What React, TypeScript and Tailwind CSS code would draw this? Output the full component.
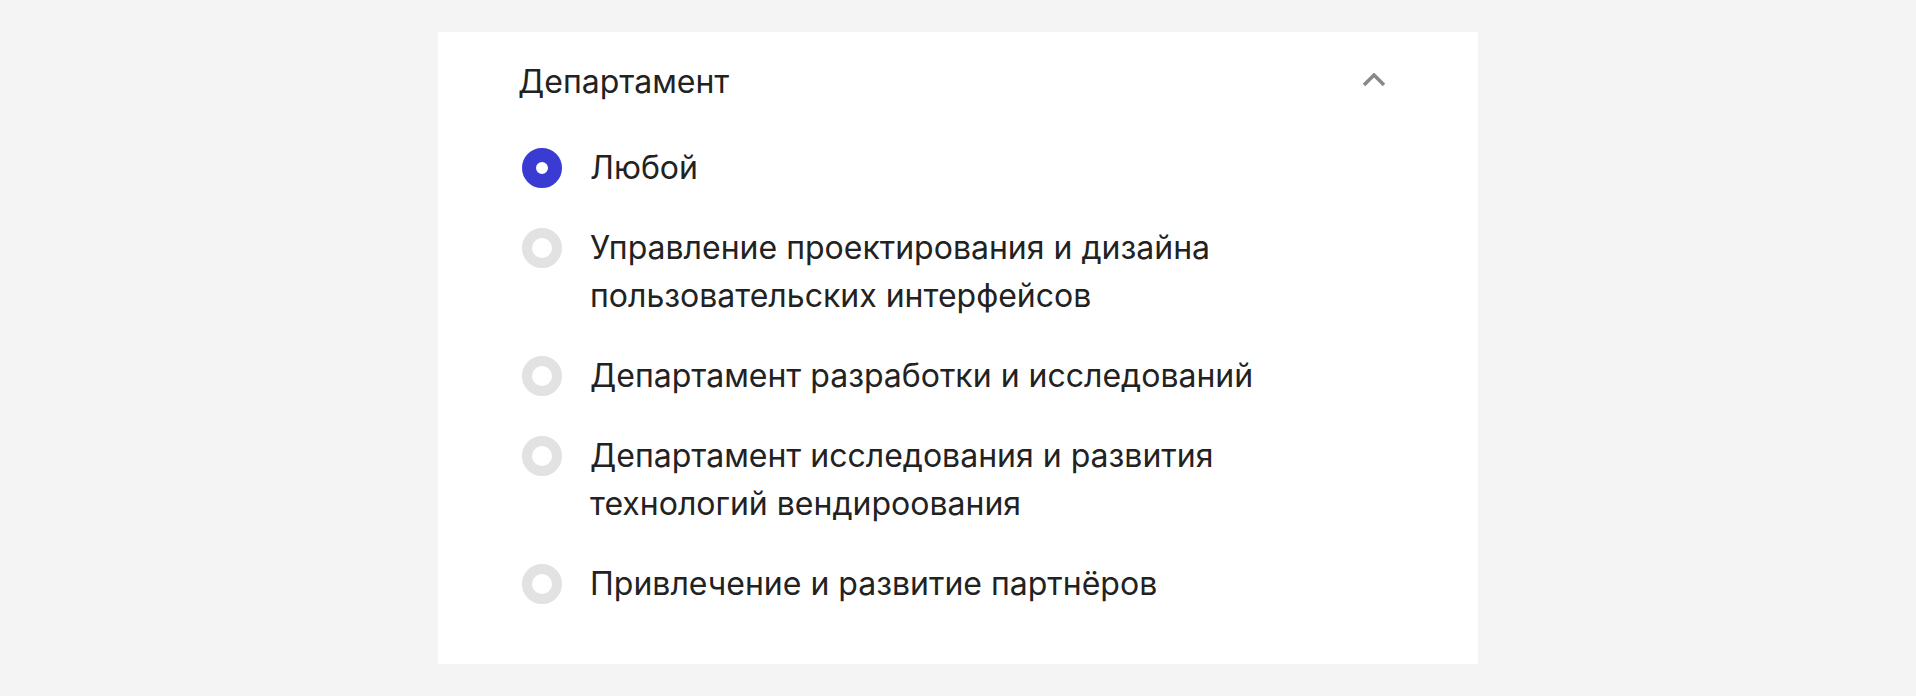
import { useState } from "react";

const options = [
  "Любой",
  "Управление проектирования и дизайна пользовательских интерфейсов",
  "Департамент разработки и исследований",
  "Департамент исследования и развития технологий вендироования",
  "Привлечение и развитие партнёров",
];

const Radio = ({ checked }: { checked: boolean }) =>
  checked ? (
    <span className="mt-1 box-border block h-10 w-10 shrink-0 rounded-full border-[14px] border-[#3a3bd3] bg-white" />
  ) : (
    <span className="mt-1 box-border block h-10 w-10 shrink-0 rounded-full border-[10px] border-[#e2e2e2] bg-white" />
  );

export default function App() {
  const [selected, setSelected] = useState(0);
  const [open, setOpen] = useState(true);

  return (
    <div className="min-h-screen bg-[#f4f4f4] py-8 font-['Inter','Noto_Sans',sans-serif] text-[#222222]">
      <div className="mx-auto w-[1040px] bg-white pl-20 pr-[92px] pt-[26px] pb-14">
        <div className="flex items-start justify-between">
          <h3 className="text-[32px] leading-[48px] font-normal">Департамент</h3>
          <button
            type="button"
            aria-label="toggle"
            onClick={() => setOpen(!open)}
            className="mt-[15px]"
          >
            <svg width="24" height="14" viewBox="0 0 24 14" fill="none">
              <polyline
                points="2,12 12,2 22,12"
                stroke="#888888"
                strokeWidth="3.5"
              />
            </svg>
          </button>
        </div>
        {open && (
          <div className="mt-[38px] flex flex-col gap-8">
            {options.map((label, i) => (
              <label
                key={label}
                onClick={() => setSelected(i)}
                className="flex cursor-pointer items-start gap-7 pl-1"
              >
                <Radio checked={selected === i} />
                <span className="max-w-[720px] text-[32px] leading-[48px]">
                  {label}
                </span>
              </label>
            ))}
          </div>
        )}
      </div>
    </div>
  );
}
